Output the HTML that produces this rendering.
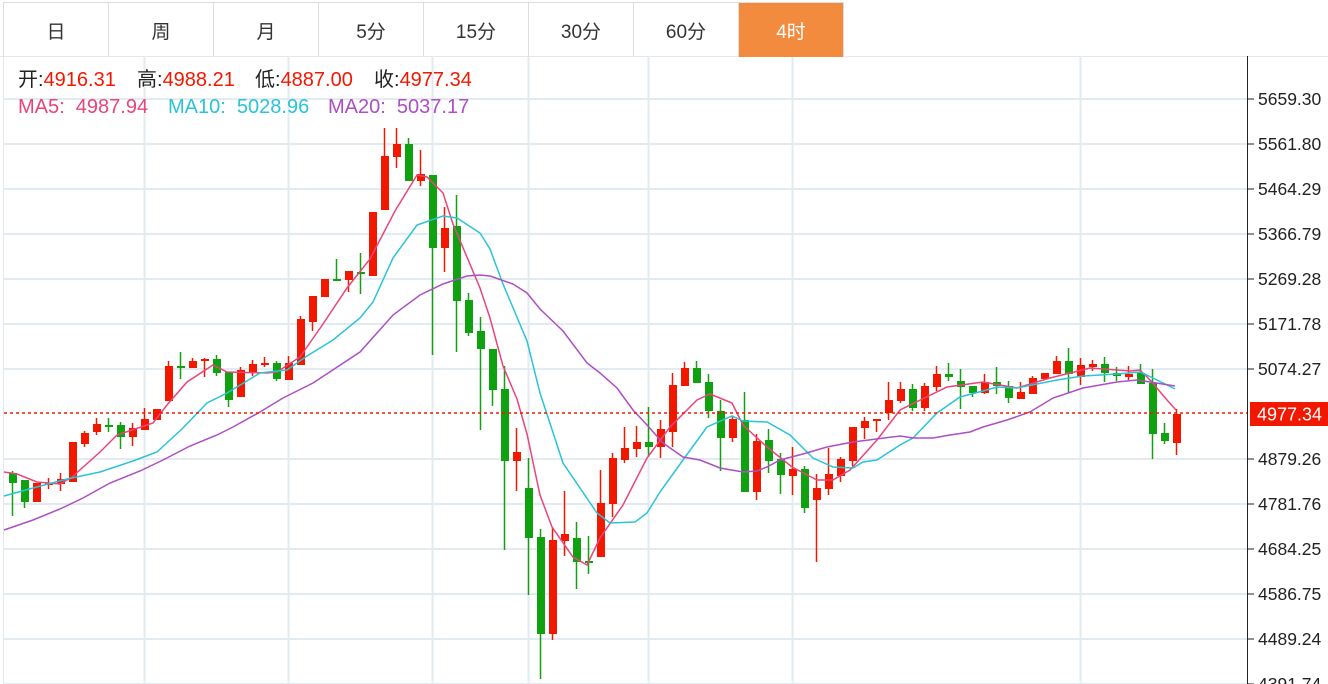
<!DOCTYPE html>
<html><head><meta charset="utf-8"><style>
html,body{margin:0;padding:0;background:#fff;width:1328px;height:684px;overflow:hidden}
body{font-family:"Liberation Sans","Noto Sans CJK SC",sans-serif;position:relative}
.tabs{position:absolute;left:3px;top:2px;height:54px;display:flex;border-top:1px solid #ddd}
.tab{width:104px;height:54px;border-right:1px solid #ddd;display:flex;align-items:center;justify-content:center;font-size:19px;color:#333}
.tab:first-child{border-left:1px solid #ddd}
.act{background:#f38b3f;color:#fff}
.i{position:absolute;font-size:20px;white-space:pre;line-height:24px}
.r{color:#f21800}
svg{position:absolute;left:0;top:0}
</style></head><body>
<svg id="c" width="1328" height="684" xmlns="http://www.w3.org/2000/svg"></svg>
<div class="tabs"><div class="tab">日</div><div class="tab">周</div><div class="tab">月</div><div class="tab">5分</div><div class="tab">15分</div><div class="tab">30分</div><div class="tab">60分</div><div class="tab act">4时</div></div>
<div class="i" style="left:18px;top:68px;color:#222">开:<span class="r">4916.31</span></div>
<div class="i" style="left:137px;top:68px;color:#222">高:<span class="r">4988.21</span></div>
<div class="i" style="left:255px;top:68px;color:#222">低:<span class="r">4887.00</span></div>
<div class="i" style="left:374px;top:68px;color:#222">收:<span class="r">4977.34</span></div>
<div class="i" style="left:18px;top:95px;color:#e9457b">MA5:  4987.94</div>
<div class="i" style="left:168px;top:95px;color:#2ac3d8">MA10:  5028.96</div>
<div class="i" style="left:328px;top:95px;color:#ad4fc4">MA20:  5037.17</div>
<script>
var s='';
s+='<line x1="3.5" y1="56" x2="3.5" y2="684" stroke="#e3e8ee"/>';
s+='<line x1="0" y1="56.5" x2="1328" y2="56.5" stroke="#e3e8ee"/>';
[144,288,432,528,648,792,1080].forEach(function(x){s+='<line x1="'+(x+.5)+'" y1="56" x2="'+(x+.5)+'" y2="684" stroke="#e3ebf2" stroke-width="2"/>';});
var labs=["5659.30","5561.80","5464.29","5366.79","5269.28","5171.78","5074.27","","4879.26","4781.76","4684.25","4586.75","4489.24","4391.74"];
for(var k=0;k<14;k++){var y=99+45*k;if(k!=7){s+='<line x1="4" y1="'+y+'" x2="1247" y2="'+y+'" stroke="#e3ebf2" stroke-width="2"/>';
s+='<line x1="1247" y1="'+y+'" x2="1254" y2="'+y+'" stroke="#222"/>';
s+='<text x="1258" y="'+(y+6)+'" font-size="17.5" fill="#222" font-family="Liberation Sans">'+labs[k]+'</text>';}}
s+='<line x1="1247.5" y1="56" x2="1247.5" y2="684" stroke="#222"/>';
var C=[
[473,483,471,516,0],[480,502,480,508,0],[483,502,483,502,1],[483,485,478,489,1],[479,484,473,491,1],[442,482,442,482,1],[433,444,431,447,1],[424,432,418,435,1],[425,426,418,432,0],[425,437,422,449,0],[428,437,423,446,1],[419,430,408,430,1],[409,420,409,420,1],[366,401,361,401,1],[366,368,352,379,0],[361,368,358,368,1],[359,361,358,377,1],[359,373,355,376,0],[372,400,372,407,0],[370,397,367,397,1],[364,372,360,376,1],[363,365,357,367,1],[363,379,361,381,0],[363,380,356,380,1],
[319,365,316,365,1],[296,322,296,331,1],[279,297,279,297,1],[279,281,259,281,0],[271,280,271,292,1],[272,274,253,294,0],[212,276,212,276,1],[156,210,128,210,1],[144,157,128,168,1],[144,181,138,181,0],[174,181,150,186,1],[175,248,175,355,0],[228,248,207,272,1],[226,301,195,352,0],[300,333,293,336,0],[331,349,317,430,0],[349,390,349,406,0],[389,461,366,550,0],[452,461,428,491,1],[488,538,458,595,0],[537,634,529,679,0],[540,634,527,640,1],[534,541,491,556,1],[538,562,522,589,0],[561,563,536,574,0],[503,557,470,557,1],[458,504,453,517,1],
[448,460,427,463,1],[442,449,426,457,1],[442,447,407,457,0],[429,447,420,458,1],[385,432,373,447,1],[368,386,362,386,1],[368,383,361,383,0],[382,411,374,418,0],[411,438,400,471,0],[419,438,416,442,1],[420,492,392,492,0],[441,492,434,500,1],[440,461,429,473,0],[459,475,453,494,0],[469,476,447,495,1],[469,508,466,513,0],[488,500,474,562,1],[474,489,448,495,1],[459,476,457,482,1],[427,461,427,466,1],[421,428,417,439,1],[419,421,419,432,1],[400,413,382,420,1],[389,401,382,403,1],
[389,408,384,411,0],[386,408,383,411,1],[374,387,366,391,1],[374,377,363,381,0],[381,387,369,409,0],[386,393,386,397,0],[382,393,374,394,1],[382,386,367,394,0],[386,398,381,403,0],[392,399,382,399,1],[378,394,376,394,1],[373,379,373,379,1],[361,374,356,374,1],[361,374,348,393,0],[365,377,358,385,1],[364,367,360,371,1],[364,373,357,382,0],[373,376,367,381,0],[374,377,366,380,1],[373,384,364,384,0],[383,434,369,459,0],[433,441,423,444,0],[414,443,409,455,1]];
C.forEach(function(c,i){var x=12+12*i;var col=c[4]?'#f21800':'#0fa10f';
s+='<line x1="'+(x+.5)+'" y1="'+c[2]+'" x2="'+(x+.5)+'" y2="'+c[3]+'" stroke="'+col+'" stroke-width="1.5"/>';
var h=Math.max(2,c[1]-c[0]);s+='<rect x="'+(x-3)+'" y="'+c[0]+'" width="8" height="'+h+'" fill="'+col+'"/>';});
function pl(p,col){s+='<polyline fill="none" stroke="'+col+'" stroke-width="1.5" points="'+p+'"/>';}
pl("4,472 17,474 37,482 60,484 72,477 100,452 117,435 153,423 167,405 187,382 213,365 227,372 267,373 277,372 300,357 323,324 347,288 370,259 395,211 417,175 427,177 443,193 453,224 480,288 490,318 503,366 517,399 527,434 540,495 552,527 573,557 587,565 600,538 623,505 647,458 670,427 697,400 710,394 732,403 743,425 767,447 792,467 817,480 833,480 850,470 877,440 900,410 947,387 983,382 1017,388 1050,378 1090,368 1130,371 1140,370 1150,380 1167,400 1176,410","#e9457b");
pl("4,496 33,488 67,479 100,472 133,461 157,452 183,428 207,403 227,393 260,373 287,370 307,356 333,340 360,318 373,302 393,258 417,225 443,216 457,218 480,233 490,249 503,284 527,341 540,393 563,463 597,513 610,523 635,522 647,513 660,492 683,460 707,427 732,416 743,421 767,422 790,435 813,458 833,467 853,468 863,462 877,460 900,445 913,438 937,413 960,397 983,391 997,387 1017,388 1037,384 1057,380 1083,376 1117,374 1140,372 1153,378 1175,389","#2ac3d8");
pl("4,530 33,520 60,509 83,498 110,483 140,471 163,460 190,446 217,435 233,427 260,412 283,398 313,383 360,352 393,315 420,295 443,284 467,276 480,275 490,276 513,284 527,293 540,309 563,331 587,363 600,373 617,388 633,410 647,425 663,443 683,457 700,460 720,468 743,472 757,471 767,467 780,460 803,454 827,447 853,442 900,436 913,438 933,438 950,435 970,432 983,427 1007,420 1030,412 1053,398 1083,388 1117,382 1137,380 1150,382 1175,386","#ad4fc4");
s+='<line x1="4" y1="413" x2="1247" y2="413" stroke="#f21800" stroke-width="1.5" stroke-dasharray="3,3"/>';
s+='<rect x="1250" y="402" width="78" height="24" fill="#f21800"/><text x="1257" y="420.5" font-size="18" fill="#fff" font-family="Liberation Sans">4977.34</text>';
document.getElementById('c').innerHTML=s;
</script>
</body></html>
